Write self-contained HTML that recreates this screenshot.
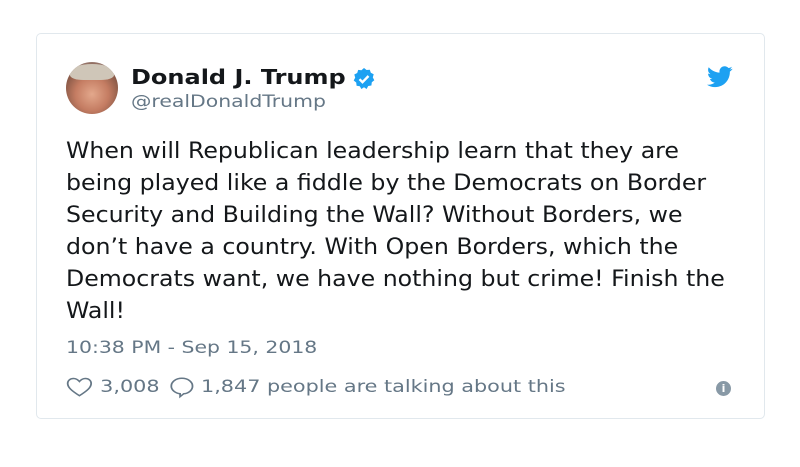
<!DOCTYPE html>
<html><head><meta charset="utf-8"><style>
*{margin:0;padding:0;box-sizing:border-box}
body{width:800px;height:467px;background:#fff;font-family:"DejaVu Sans","Liberation Sans",sans-serif;position:relative;overflow:hidden}
.card{position:absolute;left:36px;top:33px;width:729px;height:386px;border:1px solid #e1e8ed;border-radius:5px}
.av{position:absolute;left:66px;top:62px;width:52px;height:52px;border-radius:50%;background:radial-gradient(circle at 50% 62%,#e3a88c 0,#c47c62 40%,#8a5a48 68%,#b9c6cf 100%);overflow:hidden}
.av:before{content:"";position:absolute;left:4px;top:2px;width:44px;height:16px;border-radius:50% 50% 30% 30%;background:#cfc6b8}
.s{transform-origin:0 0;transform:scaleX(1.2);white-space:nowrap}
.name{position:absolute;left:131px;top:65px;font-size:20px;font-weight:bold;color:#14171a}
.chk{position:absolute;left:352px;top:67px}
.handle{position:absolute;left:131px;top:92px;font-size:17px;color:#657786}
.bird{position:absolute;left:707px;top:66px}
.text{position:absolute;left:66px;top:136px;font-size:22px;line-height:32px;color:#14171a;transform-origin:0 0;transform:scaleX(1.075);white-space:nowrap}
.time{position:absolute;left:66px;top:338px;font-size:17px;color:#657786}
.foot{position:absolute;left:66px;top:375px;font-size:17px;color:#657786;display:flex;align-items:center;transform-origin:0 0;transform:scaleX(1.22)}
.info{position:absolute;left:716px;top:381px;width:15px;height:15px;border-radius:50%;background:#8899a6;color:#fff;font-size:11px;font-weight:bold;text-align:center;line-height:15px}
</style></head><body>
<div class="card"></div>
<div class="av"></div>
<div class="name s">Donald J. Trump</div>
<svg class="chk" width="24" height="24" viewBox="0 0 24 24"><path fill="#1da1f2" d="M12 1l2.6 2 3.2-.3 1 3.1 2.9 1.5-.9 3.1 1.5 2.9-2.5 2-.4 3.2-3.2.5L14.6 22 12 20.2 9.4 22l-1.6-2.8-3.2-.5-.4-3.2-2.5-2 1.5-2.9-.9-3.1 2.9-1.5 1-3.1 3.2.3z"/><path d="M7.5 12.2l3 3 6-6.2" stroke="#fff" stroke-width="2.4" fill="none"/></svg>
<div class="handle s">@realDonaldTrump</div>
<svg class="bird" width="26" height="22" viewBox="0 0 24 20"><path fill="#1da1f2" d="M23.6 2.4c-.9.4-1.8.6-2.8.8 1-.6 1.8-1.6 2.1-2.7-.9.6-2 1-3.1 1.2C18.9.7 17.6.1 16.3.1c-2.7 0-4.8 2.2-4.8 4.8 0 .4 0 .8.1 1.1C7.6 5.8 4 3.9 1.6 1 1.2 1.7 1 2.5 1 3.4c0 1.7.9 3.2 2.2 4-.8 0-1.5-.2-2.2-.6v.1c0 2.3 1.7 4.3 3.9 4.7-.4.1-.8.2-1.3.2-.3 0-.6 0-.9-.1.6 1.9 2.4 3.3 4.5 3.4-1.7 1.3-3.7 2.1-6 2.1-.4 0-.8 0-1.2-.1 2.1 1.4 4.7 2.2 7.4 2.2 8.9 0 13.7-7.4 13.7-13.7v-.6c1-.7 1.8-1.5 2.5-2.5z"/></svg>
<div class="text">When will Republican leadership learn that they are<br>being played like a fiddle by the Democrats on Border<br>Security and Building the Wall? Without Borders, we<br>don’t have a country. With Open Borders, which the<br>Democrats want, we have nothing but crime! Finish the<br>Wall!</div>
<div class="time s">10:38 PM - Sep 15, 2018</div>
<div class="foot"><svg width="22" height="22" viewBox="0 0 24 22" style="margin-right:6px"><path d="M12 20.5C5 15 1.5 11.5 1.5 7 1.5 4 3.8 1.7 6.7 1.7c2.2 0 3.9 1.3 5.3 3.3 1.4-2 3.1-3.3 5.3-3.3 2.9 0 5.2 2.3 5.2 5.3 0 4.5-3.5 8-10.5 13.5z" fill="none" stroke="#657786" stroke-width="1.6"/></svg>3,008<svg width="22" height="24" viewBox="0 0 24 24" style="margin:0 5px 0 7px"><path d="M12 2.5c-5.3 0-9.5 3.8-9.5 8.5 0 4.2 3.4 7.6 7.9 8.4v3.1l3.2-3.1c4.6-.6 7.9-4.1 7.9-8.4 0-4.7-4.2-8.5-9.5-8.5z" fill="none" stroke="#657786" stroke-width="1.6"/></svg>1,847 people are talking about this</div>
<div class="info">i</div>
</body></html>
